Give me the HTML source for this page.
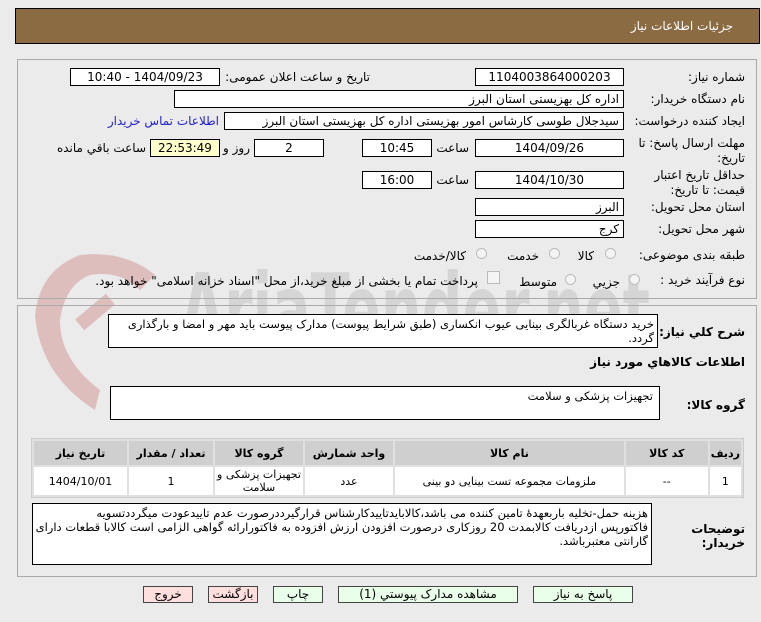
<!DOCTYPE html>
<html><head><meta charset="utf-8">
<style>
body{margin:0;width:761px;height:622px;background:#ebebeb;position:relative;overflow:hidden;font-family:"DejaVu Sans","Noto Sans CJK SC",sans-serif;font-size:11px;color:#000}
.a{position:absolute;white-space:nowrap}
.in{position:absolute;background:#fff;border:1px solid #000;box-sizing:border-box;height:18px;line-height:16px;font-size:12px;text-align:center;direction:rtl}
.inr{text-align:right;padding-right:4px}
.lbl{position:absolute;direction:rtl;text-align:right;font-size:12px;white-space:nowrap}
.panel{position:absolute;border:1px solid #aaa;box-sizing:border-box}
.radio{position:absolute;width:11px;height:11px;border-radius:50%;border:1px solid #bbb;background:#f4f4f4;box-sizing:border-box}
.ta{position:absolute;background:#fff;border:1px solid #000;box-sizing:border-box;direction:rtl;text-align:right;font-size:11.5px;padding:2px 3px;line-height:14px;white-space:nowrap;overflow:hidden}
table{position:absolute;border-collapse:separate;border-spacing:2px;background:#e0e0e0;border:1px solid #ccc}
td{font-size:11px;text-align:center;direction:rtl}
th{background:#cfcfcf;font-size:11px;height:22px;direction:rtl}
.btn{position:absolute;height:17px;border:1px solid #444;box-sizing:border-box;font-size:12px;text-align:center;line-height:15px;background:#eaffea}
.pink{background:#ffdede}
</style></head><body>
<svg class="a" style="left:20px;top:245px" width="700" height="200" viewBox="0 0 700 200">
<path d="M60 10 Q20 25 15 70 Q20 130 75 165 L80 145 Q40 115 40 75 Q45 40 70 30 Q100 25 120 45 L135 30 Q105 5 60 10Z" fill="#d9a9a9" opacity="0.7"/>
<rect x="55" y="60" width="40" height="14" fill="#d9a9a9" opacity="0.7" transform="rotate(-40 75 67)"/>
<text x="160" y="100" font-size="100" font-weight="bold" fill="#c8c8c8" opacity="0.6" font-family="DejaVu Sans" textLength="470" lengthAdjust="spacingAndGlyphs">AriaTender.net</text>
</svg>
<div class="a" style="left:15px;top:8px;width:745px;height:36px;background:#8b6b41;border:1px solid #000;box-sizing:border-box"></div>
<div class="lbl" style="right:28px;top:19px;color:#fff;font-size:12px">جزئیات اطلاعات نیاز</div>

<div class="panel" style="left:17px;top:59px;width:740px;height:240px"></div>
<div class="panel" style="left:17px;top:305px;width:740px;height:272px"></div>

<div class="lbl" style="right:16px;top:70px">شماره نیاز:</div>
<div class="in" style="left:475px;top:68px;width:149px">1104003864000203</div>
<div class="lbl" style="right:391px;top:70px">تاریخ و ساعت اعلان عمومی:</div>
<div class="in" style="left:70px;top:68px;width:150px">1404/09/23 - 10:40</div>

<div class="lbl" style="right:16px;top:92px">نام دستگاه خریدار:</div>
<div class="in inr" style="left:174px;top:90px;width:450px">اداره کل بهزیستی استان البرز</div>

<div class="lbl" style="right:16px;top:114px">ایجاد کننده درخواست:</div>
<div class="in inr" style="left:224px;top:112px;width:400px">سیدجلال طوسی کارشاس امور بهزیستی اداره کل بهزیستی استان البرز</div>
<div class="lbl" style="right:542px;top:114px;color:#2020d0">اطلاعات تماس خریدار</div>

<div class="lbl" style="right:16px;top:136px;line-height:15px">مهلت ارسال پاسخ: تا<br>تاریخ:</div>
<div class="in" style="left:475px;top:139px;width:149px">1404/09/26</div>
<div class="lbl" style="right:292px;top:141px">ساعت</div>
<div class="in" style="left:362px;top:139px;width:70px">10:45</div>
<div class="in" style="left:254px;top:139px;width:70px">2</div>
<div class="lbl" style="right:511px;top:141px">روز و</div>
<div class="in" style="left:150px;top:139px;width:70px;background:#ffffcc">22:53:49</div>
<div class="lbl" style="right:615px;top:141px">ساعت باقي مانده</div>

<div class="lbl" style="right:16px;top:168px;line-height:15px;text-align:right">حداقل تاریخ اعتبار<br>قیمت: تا تاریخ:</div>
<div class="in" style="left:475px;top:171px;width:149px">1404/10/30</div>
<div class="lbl" style="right:292px;top:173px">ساعت</div>
<div class="in" style="left:362px;top:171px;width:70px">16:00</div>

<div class="lbl" style="right:16px;top:200px">استان محل تحویل:</div>
<div class="in inr" style="left:475px;top:198px;width:149px">البرز</div>
<div class="lbl" style="right:16px;top:222px">شهر محل تحویل:</div>
<div class="in inr" style="left:475px;top:220px;width:149px">کرج</div>

<div class="lbl" style="right:16px;top:248px">طبقه بندی موضوعی:</div>
<div class="radio" style="left:605px;top:248px"></div><div class="lbl" style="right:167px;top:249px">کالا</div>
<div class="radio" style="left:549px;top:248px"></div><div class="lbl" style="right:222px;top:249px">خدمت</div>
<div class="radio" style="left:476px;top:248px"></div><div class="lbl" style="right:295px;top:249px">کالا/خدمت</div>

<div class="lbl" style="right:16px;top:273px">نوع فرآیند خرید :</div>
<div class="radio" style="left:629px;top:274px"></div><div class="lbl" style="right:141px;top:275px">جزیي</div>
<div class="radio" style="left:565px;top:274px"></div><div class="lbl" style="right:204px;top:275px">متوسط</div>
<div class="a" style="left:487px;top:271px;width:11px;height:11px;border:1px solid #bbb;background:#f4f4f4"></div>
<div class="lbl" style="right:283px;top:274px">پرداخت تمام یا بخشی از مبلغ خرید،از محل "اسناد خزانه اسلامی" خواهد بود.</div>

<div class="lbl" style="right:16px;top:325px;font-weight:bold">شرح کلي نياز:</div>
<div class="ta" style="left:108px;top:314px;width:550px;height:34px">خرید دستگاه غربالگری بینایی عیوب انکساری (طبق شرایط پیوست) مدارک پیوست باید مهر و امضا و بارگذاری<br>گردد.</div>
<div class="lbl" style="right:16px;top:355px;font-weight:bold">اطلاعات کالاهاي مورد نياز</div>
<div class="lbl" style="right:16px;top:398px;font-weight:bold">گروه کالا:</div>
<div class="ta" style="left:110px;top:386px;width:550px;height:34px;padding-right:6px">تجهیزات پزشکی و سلامت</div>

<table style="left:31px;top:438px;width:713px;height:58px" dir="rtl">
<tr><th style="width:27px">ردیف</th><th style="width:80px">کد کالا</th><th>نام کالا</th><th style="width:86px">واحد شمارش</th><th style="width:86px">گروه کالا</th><th style="width:82px">تعداد / مقدار</th><th style="width:91px">تاریخ نیاز</th></tr>
<tr style="background:#fff"><td style="background:#fff">1</td><td style="background:#fff">--</td><td style="background:#fff">ملزومات مجموعه تست بینایی دو بینی</td><td style="background:#fff">عدد</td><td style="background:#fff;line-height:13px">تجهیزات پزشکی و سلامت</td><td style="background:#fff">1</td><td style="background:#fff">1404/10/01</td></tr>
</table>

<div class="lbl" style="right:16px;top:522px;font-weight:bold;line-height:14px">توضیحات<br>خریدار:</div>
<div class="ta" style="left:32px;top:503px;width:620px;height:62px">هزینه حمل-تخلیه باربعهدهٔ تامین کننده می باشد،کالابایدتاییدکارشناس قرارگیرددرصورت عدم تاییدعودت میگرددتسویه<br>فاکتورپس ازدریافت کالابمدت 20 روزکاری درصورت افزودن ارزش افزوده به فاکتورارائه گواهی الزامی است کالابا قطعات دارای<br>گارانتی معتبرباشد.</div>

<div class="btn" style="left:533px;top:586px;width:100px">پاسخ به نیاز</div>
<div class="btn" style="left:338px;top:586px;width:180px">مشاهده مدارک پیوستي (1)</div>
<div class="btn" style="left:273px;top:586px;width:50px">چاپ</div>
<div class="btn pink" style="left:208px;top:586px;width:50px">بازگشت</div>
<div class="btn pink" style="left:143px;top:586px;width:50px">خروج</div>
</body></html>
